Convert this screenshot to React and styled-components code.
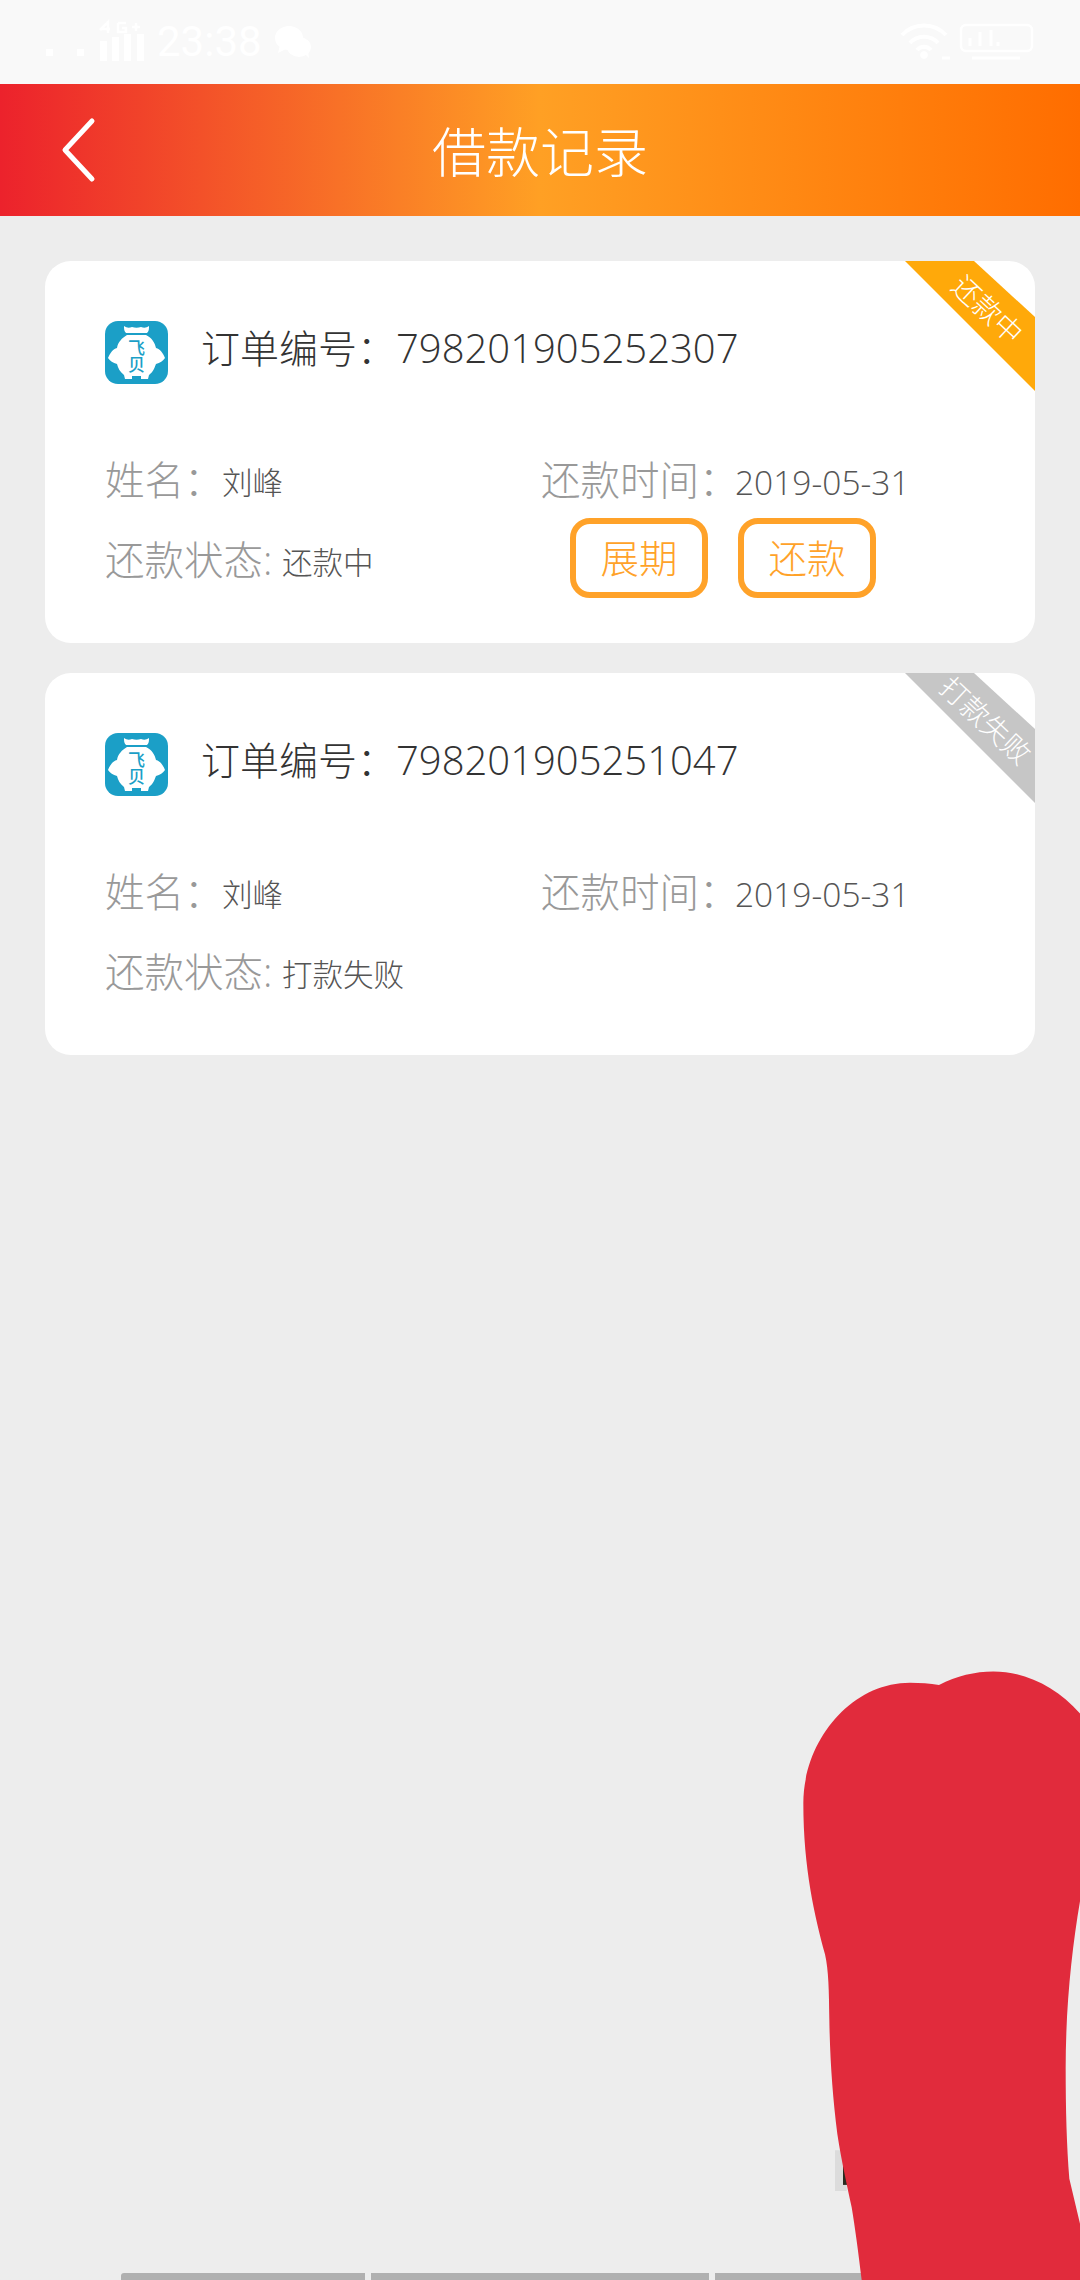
import React from 'react';
import styled, { createGlobalStyle } from 'styled-components';

const Global = createGlobalStyle`
  html, body { margin: 0; padding: 0; background: #ededed; }
  * { box-sizing: border-box; }
`;

const FONT = `"Open Sans", "Noto Sans CJK SC", sans-serif`;

const Page = styled.div`
  position: relative;
  width: 1080px;
  height: 2280px;
  overflow: hidden;
  background: #ededed;
  font-family: ${FONT};
  font-weight: 300;
`;

const StatusBar = styled.div`
  height: 84px;
  background: #f9f9f9;
  display: flex;
  align-items: center;
  justify-content: space-between;
  padding: 0 46px 0 46px;
  color: #fff;
`;

const StatusLeft = styled.div`
  display: flex;
  align-items: center;
  gap: 12px;
`;

const StatusTime = styled.span`
  font-family: Roboto, sans-serif;
  font-size: 42px;
  font-weight: 400;
  line-height: 1;
`;

const Header = styled.header`
  position: relative;
  height: 132px;
  display: flex;
  align-items: center;
  justify-content: center;
  padding-top: 3px;
  background: linear-gradient(90deg, #ec222c 0%, #ffa024 50%, #ff6d00 100%);
`;

const BackIcon = styled.svg`
  position: absolute;
  left: 58px;
  top: 33px;
`;

const Title = styled.h1`
  margin: 0;
  color: #fff;
  font-size: 54px;
  font-weight: 300;
  line-height: 1;
`;

const List = styled.main`
  display: flex;
  flex-direction: column;
  gap: 30px;
  padding: 45px 45px 0;
`;

const Card = styled.article`
  position: relative;
  height: 382px;
  overflow: hidden;
  background: #fff;
  border-radius: 26px;
  padding: 60px 60px 0;
`;

const Ribbon = styled.div`
  position: absolute;
  top: 0;
  right: 0;
  width: 130px;
  height: 130px;
  background: ${p => p.$color};
  clip-path: polygon(0 0, 69px 0, 130px 56px, 130px 130px);
`;

const RibbonText = styled.span`
  position: absolute;
  top: ${p => p.$top}px;
  right: ${p => p.$right}px;
  width: 112px;
  text-align: center;
  color: #fff;
  font-size: 28px;
  line-height: 1;
  white-space: nowrap;
  transform: rotate(43deg);
`;

const OrderRow = styled.div`
  display: flex;
  align-items: center;
  gap: 33px;
  height: 63px;
  color: #333;
  line-height: 1;
`;

const OrderText = styled.div`
  display: flex;
  align-items: baseline;
  padding-bottom: 10px;
  font-size: 40px;
  font-weight: 400;
  white-space: nowrap;
`;

const OrderLabel = styled.span`
  font-size: 39px;
  font-weight: 300;
`;

const OrderNumber = styled.span`
  font-weight: 300;
`;

const Rows = styled.div`
  display: grid;
  grid-template-columns: 436px 1fr;
  grid-auto-rows: 80px;
  margin-top: 57px;
  align-items: center;
`;

const Field = styled.div`
  display: flex;
  align-items: center;
  white-space: nowrap;
`;

const Label = styled.span`
  color: #999;
  font-size: 39.5px;
  line-height: 1;
  width: ${p => p.$width};
`;

const Value = styled.span`
  color: #555;
  font-size: ${p => p.$size || 30.5}px;
  line-height: 1;
  margin-top: 3px;
`;

const Actions = styled.div`
  display: flex;
  gap: 30px;
  padding-left: 29px;
  margin-bottom: 6px;
`;

const Action = styled.button`
  width: 138px;
  height: 80px;
  padding: 0;
  background: #fff;
  border: 6px solid #ffa229;
  border-radius: 20px;
  color: #ffa229;
  font-family: ${FONT};
  font-size: 38.5px;
  font-weight: 300;
  line-height: 1;
`;

const Scribble = styled.svg`
  position: absolute;
  left: 700px;
  top: 1640px;
`;

const BottomBars = styled.div`
  position: absolute;
  left: 121px;
  bottom: 0;
  display: flex;
  gap: 6px;
`;

const BottomBar = styled.div`
  width: ${p => p.$width}px;
  height: 7px;
  background: #b0b0b0;
  border-radius: ${p => (p.$first ? '3px 0 0 0' : '0')};
`;

const SignalIcon = () => (
  <svg width="99" height="46" viewBox="0 0 99 46" fill="#fff">
    <rect x="0" y="30" width="7" height="7" />
    <rect x="31" y="30" width="7" height="7" />
    <rect x="54" y="22" width="7" height="20" />
    <rect x="66" y="18" width="7" height="24" />
    <rect x="78" y="15" width="7" height="27" />
    <rect x="91" y="15" width="7" height="27" />
    <path d="M54 11l8-8v11M55 10h9M72 4h8M72 4v9h8v-4h-4M86 8h8M90 4v8" fill="none" stroke="#fff" strokeWidth="2.5" />
  </svg>
);

const ChatIcon = () => (
  <svg width="38" height="34" viewBox="0 0 38 34" fill="#fff">
    <ellipse cx="15" cy="13" rx="14" ry="12" />
    <ellipse cx="25" cy="22" rx="12" ry="10" />
    <path d="M6 20l-2 8 8-4zM30 28l5 5-1-8z" />
  </svg>
);

const StatusRight = () => (
  <svg width="134" height="44" viewBox="0 0 134 44" fill="none" stroke="#fff">
    <path d="M2 15a30 30 0 0 1 44 0M10 23a19 19 0 0 1 28 0M17 30a9 9 0 0 1 14 0" strokeWidth="4" />
    <circle cx="24" cy="35" r="3.5" fill="#fff" />
    <path d="M42 38h8" strokeWidth="3" />
    <rect x="61" y="5" width="71" height="26" rx="5" strokeWidth="2.5" />
    <path d="M70 26v-8M80 26v-14M91 26v-16M98 26v-4M72 38h48" strokeWidth="3" />
  </svg>
);

const Logo = () => (
  <svg width="63" height="63" viewBox="0 0 63 63">
    <rect width="63" height="63" rx="13" fill="#1b9fc7" />
    <path
      d="M19 5c3 2 5 2 8 1 3 1 6 1 9 0 3 1 5 1 8-1 0 3 0 5-2 7H21c-2-2-2-4-2-7z"
      fill="#fff"
    />
    <path
      d="M22 14h19c6 3 9 8 10 13 4 1 7 5 9 10-2 3-5 5-9 6-2 5-3 8-7 11l-1 4h-7v-3h-9v3h-7l-1-4c-4-3-6-7-7-11-4-1-7-3-9-6 2-5 5-9 9-10 1-6 5-10 10-13z"
      fill="#fff"
    />
    <text x="31.5" y="18" writingMode="vertical-rl" fontFamily='"Noto Sans CJK SC"' fontWeight="500" fontSize="17" fill="#1b9fc7">飞贝</text>
  </svg>
);

const orders = [
  {
    id: '798201905252307',
    state: '还款中',
    color: '#ffa90a',
    ribbonTop: 34,
    ribbonRight: -9,
    actions: ['展期', '还款'],
  },
  {
    id: '798201905251047',
    state: '打款失败',
    color: '#c6c6c6',
    ribbonTop: 33,
    ribbonRight: -7,
    actions: [],
  },
];

export default function App() {
  return (
    <Page>
      <Global />
      <StatusBar>
        <StatusLeft>
          <SignalIcon />
          <StatusTime>23:38</StatusTime>
          <ChatIcon />
        </StatusLeft>
        <StatusRight />
      </StatusBar>
      <Header>
        <BackIcon width="40" height="66" viewBox="0 0 40 66" fill="none">
          <path d="M34 4 L7 33 L34 62" stroke="#fff" strokeWidth="5" strokeLinecap="round" strokeLinejoin="round" />
        </BackIcon>
        <Title>借款记录</Title>
      </Header>
      <List>
        {orders.map(o => (
          <Card key={o.id}>
            <Ribbon $color={o.color} />
            <RibbonText $top={o.ribbonTop} $right={o.ribbonRight}>{o.state}</RibbonText>
            <OrderRow>
              <Logo />
              <OrderText>
                <OrderLabel>订单编号：</OrderLabel>
                <OrderNumber>{o.id}</OrderNumber>
              </OrderText>
            </OrderRow>
            <Rows>
              <Field>
                <Label $width="117px">姓名：</Label>
                <Value>刘峰</Value>
              </Field>
              <Field>
                <Label $width="194px">还款时间：</Label>
                <Value $size={33.5}>2019-05-31</Value>
              </Field>
              <Field>
                <Label $width="177px">还款状态:</Label>
                <Value>{o.state}</Value>
              </Field>
              {o.actions.length > 0 && (
                <Actions>
                  {o.actions.map(a => <Action key={a}>{a}</Action>)}
                </Actions>
              )}
            </Rows>
          </Card>
        ))}
      </List>
      <BottomBars>
        <BottomBar $first $width={244} />
        <BottomBar $width={338} />
        <BottomBar $width={150} />
      </BottomBars>
      <Scribble width="380" height="640" viewBox="0 0 1140 1568" preserveAspectRatio="none">
        <rect x="405" y="1250" width="35" height="100" fill="#dcdcdc" />
        <rect x="429" y="1285" width="12" height="50" fill="#2a2a20" />
        <path
          d="M717 110C770 88 825 77 880 77C975 77 1070 115 1140 180V640C1115 760 1097 900 1097 1050C1097 1150 1100 1240 1108 1320L1140 1430V1568H485C475 1500 465 1440 455 1390C440 1330 425 1280 412 1210C398 1120 390 1030 388 930C387 860 386 810 375 770C345 680 310 560 310 400C310 250 450 105 630 105C660 105 690 107 717 110Z"
          fill="#e12b3c"
        />
      </Scribble>
    </Page>
  );
}
